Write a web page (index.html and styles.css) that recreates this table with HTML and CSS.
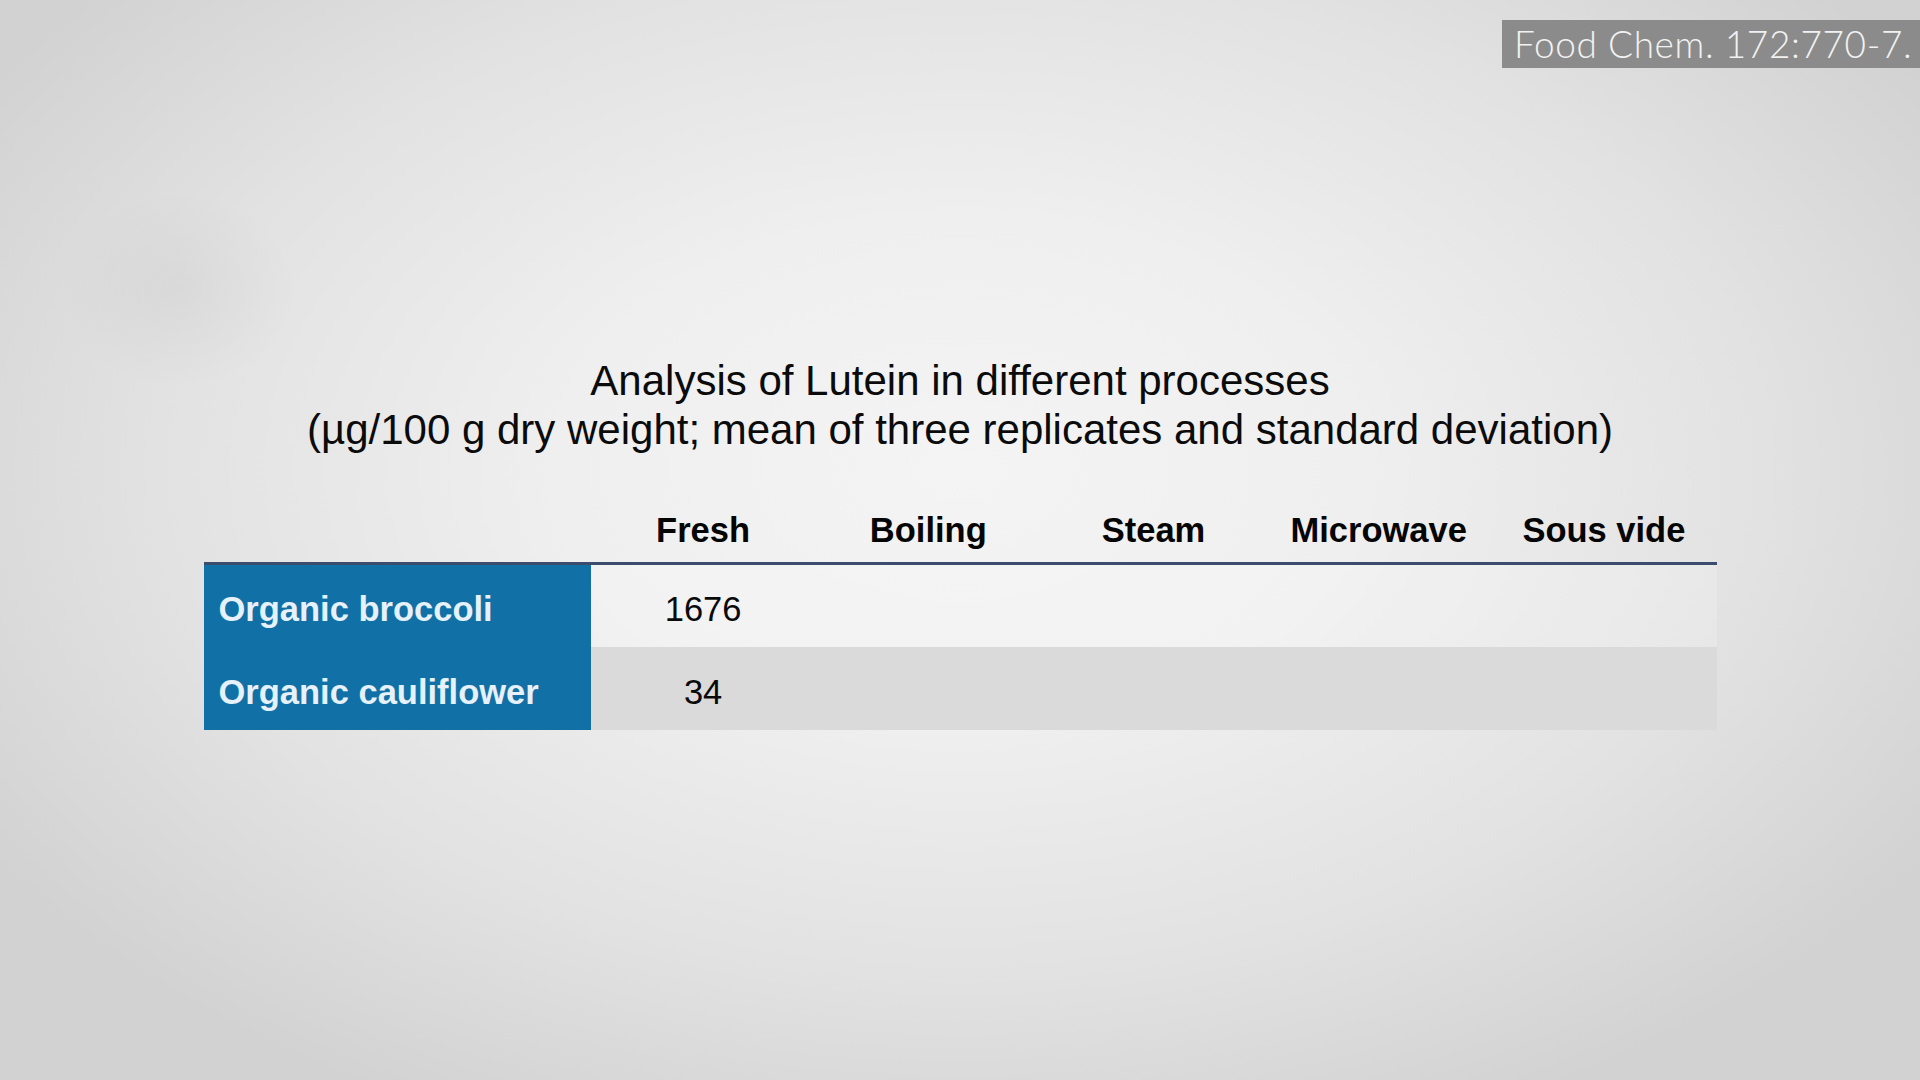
FILE: index.html
```html
<!DOCTYPE html>
<html lang="en">
<head>
<meta charset="utf-8">
<title>Analysis of Lutein</title>
<link rel="stylesheet" href="styles.css">
</head>
<body>
<div class="citation">Food Chem. 172:770-7.</div>
<main class="slide">
  <h1 class="title">
    <span class="title-line">Analysis of Lutein in different processes</span>
    <span class="title-line">(µg/100 g dry weight; mean of three replicates and standard deviation)</span>
  </h1>
  <div class="table">
    <div class="row head">
      <div class="cell label"></div>
      <div class="cell">Fresh</div>
      <div class="cell">Boiling</div>
      <div class="cell">Steam</div>
      <div class="cell">Microwave</div>
      <div class="cell">Sous vide</div>
    </div>
    <div class="row body odd">
      <div class="cell label">Organic broccoli</div>
      <div class="cell">1676</div>
      <div class="cell"></div>
      <div class="cell"></div>
      <div class="cell"></div>
      <div class="cell"></div>
    </div>
    <div class="row body even">
      <div class="cell label">Organic cauliflower</div>
      <div class="cell">34</div>
      <div class="cell"></div>
      <div class="cell"></div>
      <div class="cell"></div>
      <div class="cell"></div>
    </div>
  </div>
</main>
</body>
</html>
```
FILE: styles.css
```css
html, body {
  margin: 0;
  padding: 0;
}
body {
  width: 1920px;
  height: 1080px;
  overflow: hidden;
  position: relative;
  font-family: "Liberation Sans", Arial, sans-serif;
  color: #0a0a0a;
  background:
    radial-gradient(ellipse 120px 100px at 180px 290px, rgba(0,0,0,0.035), rgba(0,0,0,0) 100%),
    radial-gradient(ellipse 1150px 720px at 960px 470px, #f4f4f4 0%, #efefef 35%, #e2e2e2 70%, #d2d2d2 100%);
}
.citation {
  position: absolute;
  top: 20px;
  right: 0;
  left: 1502px;
  height: 48px;
  box-sizing: border-box;
  padding-left: 12px;
  background: #8b8b8b;
  color: #f2f2f2;
  font-family: Lato, "Open Sans", sans-serif;
  font-weight: 300;
  font-size: 37px;
  line-height: 48px;
  letter-spacing: 0.6px;
  white-space: nowrap;
}
.slide {
  display: flex;
  flex-direction: column;
  align-items: center;
  padding-top: 356px;
}
.title {
  margin: 0;
  display: flex;
  flex-direction: column;
  align-items: center;
  font-weight: 400;
  font-size: 42px;
  line-height: 49px;
  color: #0b0b0b;
}
.table {
  margin-top: 56px;
  width: 1513px;
  display: flex;
  flex-direction: column;
}
.row {
  display: grid;
  grid-template-columns: 387px repeat(5, 1fr);
}
.cell {
  text-align: center;
  font-size: 34.5px;
  line-height: 40px;
  white-space: nowrap;
}
.head {
  border-bottom: 3px solid #3c4c6d;
}
.head .cell {
  font-weight: 700;
  padding-bottom: 12px;
  color: #050505;
}
.body .cell {
  padding-top: 24px;
  padding-bottom: 18px;
}
.body .label {
  background: #1170a6;
  color: #e6f1f9;
  font-weight: 700;
  text-align: left;
  padding-left: 15px;
}
.odd {
  background: rgba(255, 255, 255, 0.2);
}
.even {
  background: #dadada;
}
.even .cell {
  padding-top: 25px;
  padding-bottom: 18px;
}
```
